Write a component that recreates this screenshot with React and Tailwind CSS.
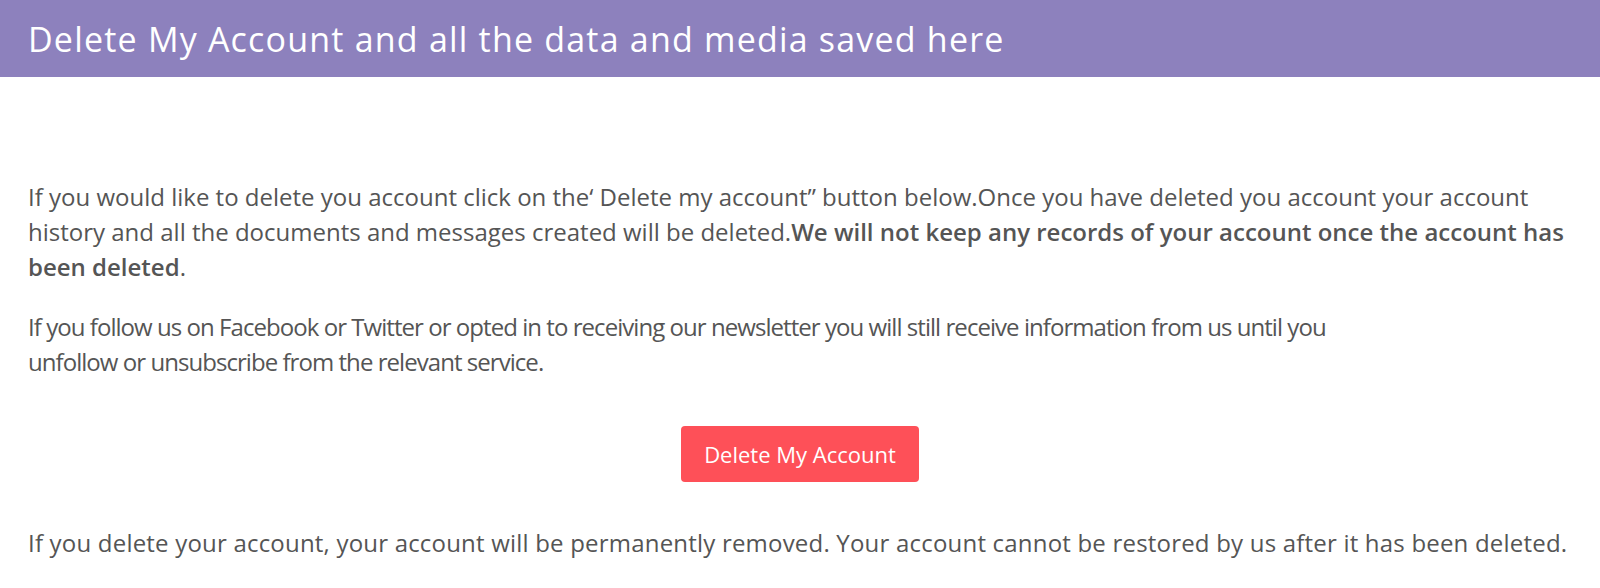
import React from 'react';

export default function App() {
    return (
        <div className="min-h-[588px] bg-white" style={{ fontFamily: '"Open Sans", "Noto Sans", sans-serif' }}>
            {/* Header */}
            <div className="h-[77px] bg-[#8d81bd] px-[28px] flex items-center">
                <h1 className="text-[34px] tracking-[1.2px] text-white leading-none">Delete My Account and all the data and media saved here</h1>
            </div>

            <div className="px-[28px] pt-[102px] text-[#555555] text-[24px] leading-[35px]">
                <p>
                    If you would like to delete you account click on the‘ Delete my account” button below.Once you have deleted you account your account history and all the documents and messages created will be deleted.<span className="font-semibold">We will not keep any records of your account once the account has been deleted</span>.
                </p>
                <p className="mt-[25px] max-w-[1310px] tracking-[-0.95px]">
                    If you follow us on Facebook or Twitter or opted in to receiving our newsletter you will still receive information from us until you unfollow or unsubscribe from the relevant service.
                </p>

                <div className="mt-[47px] flex justify-center">
                    <button className="w-[238px] h-[56px] rounded bg-[#fe5058] text-white text-[22px] font-medium">
                        Delete My Account
                    </button>
                </div>

                <p className="mt-[43px] tracking-[0.2px] whitespace-nowrap">
                    If you delete your account, your account will be permanently removed. Your account cannot be restored by us after it has been deleted.
                </p>
            </div>
        </div>
    );
}
